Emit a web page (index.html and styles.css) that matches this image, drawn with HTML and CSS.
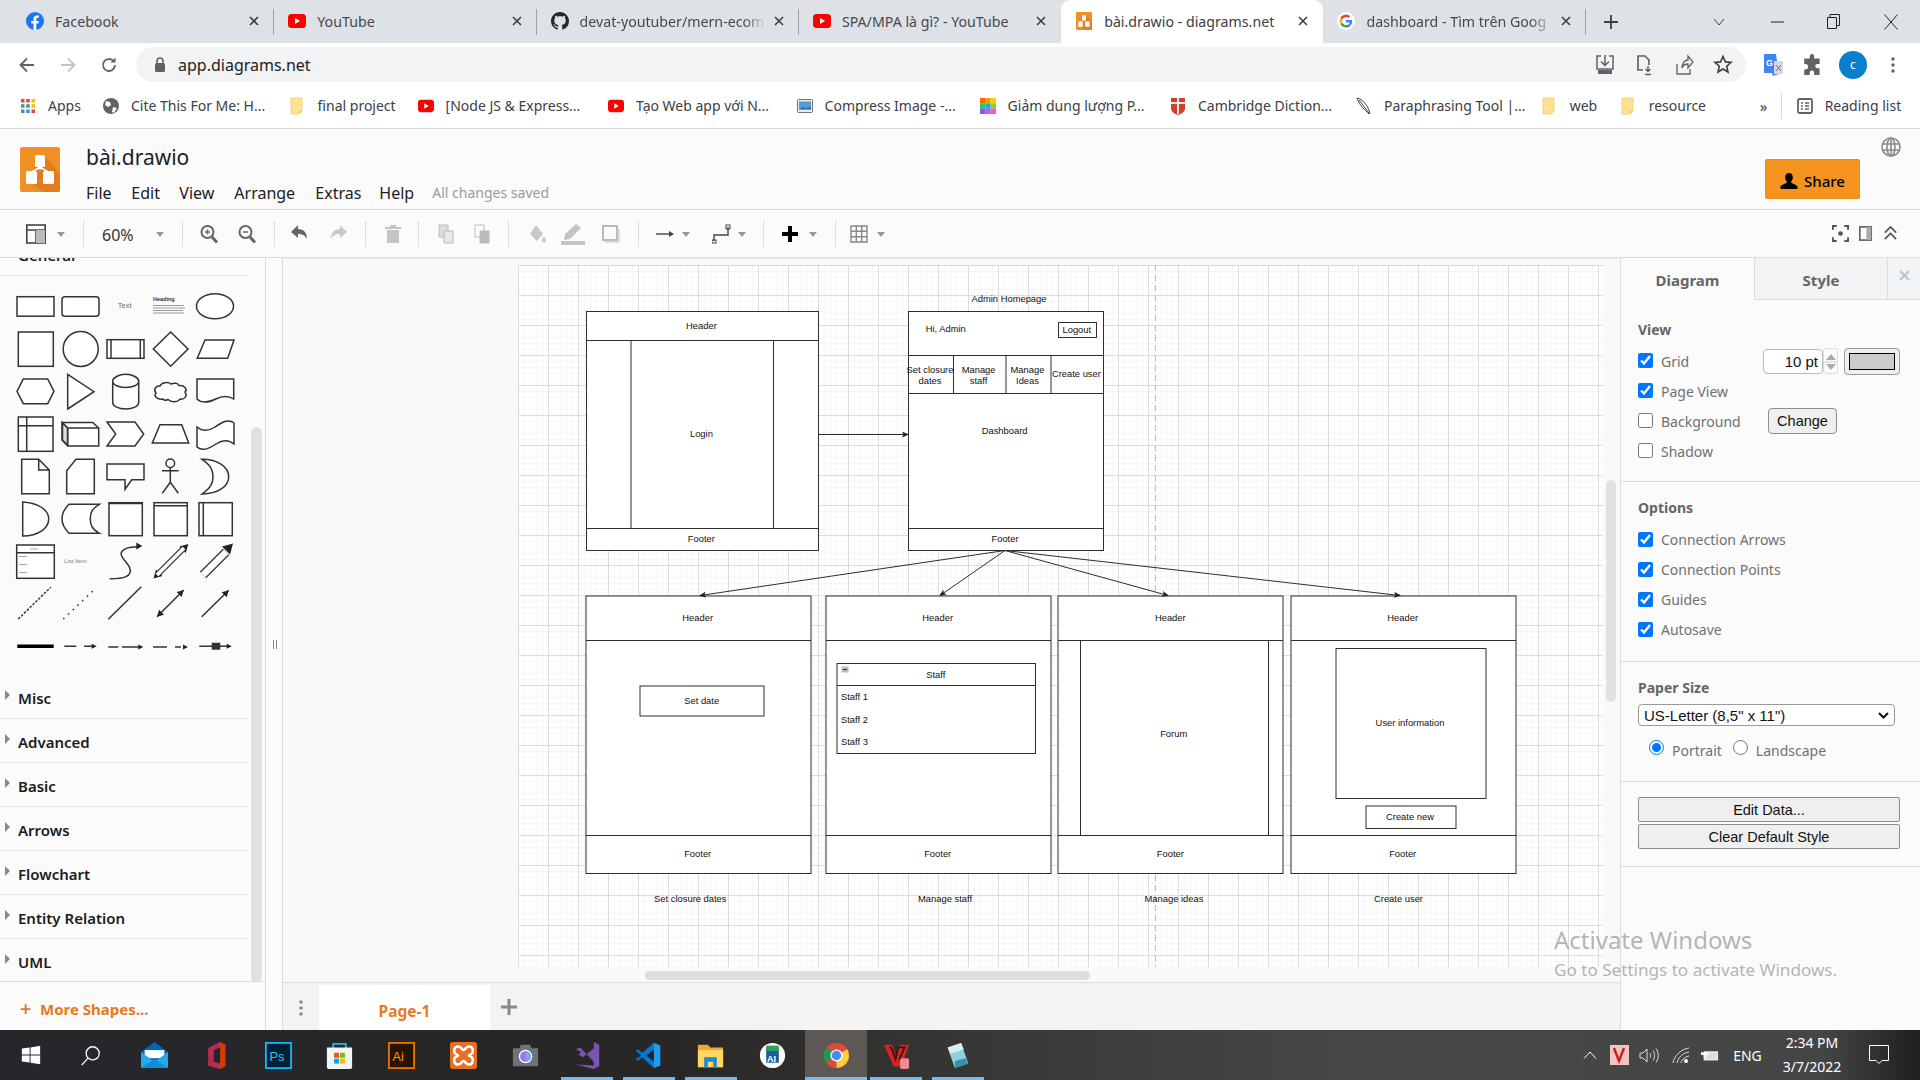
FILE: index.html
```html
<!DOCTYPE html>
<html lang="vi">
<head>
  <meta charset="UTF-8">
  <title>bài.drawio - diagrams.net</title>
  <link rel="stylesheet" href="styles.css">
</head>
<body>
  <!-- icons used more than once -->
  <svg class="defs" width="0" height="0">
    <symbol id="yt" viewBox="0 0 18 18"><rect x="0" y="2" width="18" height="14" rx="3.5" fill="#f00"/><path d="M7 6l5 3-5 3z" fill="#fff"/></symbol>
    <symbol id="folder" viewBox="0 0 16 18"><path d="M1 1h7l0 0h4v13l-3 3H1z" fill="#fde293" stroke="#f3d27a"/><path d="M12 14l-3 3v-3z" fill="#f6c95b"/></symbol>
    <symbol id="close" viewBox="0 0 10 10"><path d="M1 1l8 8M9 1l-8 8" stroke="#3c4043" stroke-width="1.6" fill="none"/></symbol>
    <symbol id="caret" viewBox="0 0 8 8"><path d="M0 2h8L4 7z" fill="currentColor"/></symbol>
    <symbol id="logo" viewBox="0 0 40 45"><rect width="40" height="45" rx="2" fill="#f08f24"/><path d="M40 27v16a2 2 0 0 1-2 2H24L8 34l12-24 9 3z" fill="#df7a1e" opacity=".85"/><rect x="15" y="8" width="10" height="12" rx="1.5" fill="#fff"/><rect x="6" y="24" width="11" height="13" rx="1.5" fill="#fff"/><rect x="23" y="24" width="11" height="13" rx="1.5" fill="#fff"/><path d="M20 19v4M20 20l-8 5M20 20l8 5" stroke="#fff" stroke-width="1.6"/></symbol>
  </svg>

  <!-- Chrome tabs -->
  <div class="tabstrip">
    <div class="tab sep">
      <svg class="tab-icon" viewBox="0 0 18 18"><circle cx="9" cy="9" r="9" fill="#1877f2"/><path d="M12.4 11.5l.4-2.6h-2.500V7.200c0-.7.4-1.400 1.500-1.400h1.100V3.600s-1-.2-2-.2c-2.100 0-3.400 1.300-3.400 3.500v2H5.200v2.600h2.300V18h2.800v-6.500z" fill="#fff"/></svg>
      <span class="tab-title">Facebook</span>
      <svg class="tab-close"><use href="#close"/></svg>
    </div>
    <div class="tab sep">
      <svg class="tab-icon"><use href="#yt"/></svg>
      <span class="tab-title">YouTube</span>
      <svg class="tab-close"><use href="#close"/></svg>
    </div>
    <div class="tab sep">
      <svg class="tab-icon" viewBox="0 0 16 16"><path fill="#24292f" d="M8 0C3.580 0 0 3.580 0 8c0 3.540 2.290 6.530 5.470 7.590.4.070.55-.17.55-.38 0-.19-.01-.82-.01-1.490-2.010.37-2.530-.49-2.690-.94-.09-.23-.48-.94-.82-1.130-.28-.15-.68-.52-.01-.53.63-.01 1.080.58 1.230.82.72 1.210 1.870.87 2.330.66.070-.52.28-.87.51-1.070-1.780-.2-3.640-.89-3.640-3.950 0-.87.31-1.590.82-2.150-.08-.2-.36-1.020.08-2.120 0 0 .67-.21 2.200.82.64-.18 1.320-.27 2-.27s1.360.09 2 .27c1.530-1.040 2.200-.82 2.200-.82.44 1.100.16 1.920.08 2.120.51.56.82 1.270.82 2.150 0 3.070-1.870 3.750-3.650 3.950.29.25.54.73.54 1.480 0 1.070-.01 1.930-.01 2.200 0 .21.15.46.55.38A8.010 8.010 0 0 0 16 8c0-4.420-3.580-8-8-8z"/></svg>
      <span class="tab-title fade">devat-youtuber/mern-ecom</span>
      <svg class="tab-close"><use href="#close"/></svg>
    </div>
    <div class="tab">
      <svg class="tab-icon"><use href="#yt"/></svg>
      <span class="tab-title">SPA/MPA là gì? - YouTube</span>
      <svg class="tab-close"><use href="#close"/></svg>
    </div>
    <div class="tab active">
      <svg class="tab-icon"><use href="#logo"/></svg>
      <span class="tab-title">bài.drawio - diagrams.net</span>
      <svg class="tab-close"><use href="#close"/></svg>
    </div>
    <div class="tab sep">
      <svg class="tab-icon" viewBox="0 0 18 18"><circle cx="9" cy="9" r="9" fill="#fff"/><path d="M15.200 9.200c0-.5 0-.9-.1-1.300H9v2.500h3.500a3 3 0 0 1-1.300 2l2 1.500c1.200-1.100 2-2.700 2-4.700z" fill="#4285f4"/><path d="M9 15.500c1.700 0 3.200-.6 4.200-1.600l-2-1.500c-.6.4-1.300.6-2.200.6-1.700 0-3.100-1.100-3.600-2.600l-2.100 1.600c1 2.100 3.200 3.500 5.700 3.500z" fill="#34a853"/><path d="M5.400 10.400a3.900 3.900 0 0 1 0-2.800L3.300 6a6.400 6.400 0 0 0 0 6z" fill="#fbbc05"/><path d="M9 5c.9 0 1.800.3 2.400.9l1.800-1.800A6.500 6.500 0 0 0 3.300 6l2.100 1.600C5.900 6.100 7.300 5 9 5z" fill="#ea4335"/></svg>
      <span class="tab-title fade">dashboard - Tìm trên Goog</span>
      <svg class="tab-close"><use href="#close"/></svg>
    </div>
    <svg class="new-tab" viewBox="0 0 14 14"><path d="M7 0v14M0 7h14" stroke="#3c4043" stroke-width="1.8"/></svg>
    <div class="win-controls">
      <span class="win-btn"><svg width="12" height="8" viewBox="0 0 12 8"><path d="M1 1l5 6 5-6" stroke="#444" fill="none"/></svg></span>
      <span class="win-btn"><svg width="13" height="2" viewBox="0 0 13 2"><path d="M0 1h13" stroke="#222"/></svg></span>
      <span class="win-btn"><svg width="13" height="15" viewBox="0 0 13 15"><path d="M.5 3.500h9v11h-9zM3 3.500V.5h9.500v11H9.500" stroke="#222" fill="none"/></svg></span>
      <span class="win-btn"><svg width="14" height="16" viewBox="0 0 14 16"><path d="M.5.5l13 15M13.500.5l-13 15" stroke="#222" fill="none"/></svg></span>
    </div>
  </div>

  <!-- Address bar -->
  <div class="addressbar">
    <svg class="nav-btn" viewBox="0 0 18 18"><path d="M16 9H3M9 2.500L2.500 9 9 15.500" stroke="#5f6368" stroke-width="1.800" fill="none"/></svg>
    <svg class="nav-btn" viewBox="0 0 18 18"><path d="M2 9h13M9 2.500L15.500 9 9 15.500" stroke="#c0c3c7" stroke-width="1.800" fill="none"/></svg>
    <svg class="nav-btn" viewBox="0 0 18 18"><path d="M15 9a6 6 0 1 1-1.800-4.300" stroke="#5f6368" stroke-width="1.800" fill="none"/><path d="M15.500 1.500v5h-5z" fill="#5f6368"/></svg>
    <div class="omnibox">
      <svg class="lock" viewBox="0 0 12 15"><path d="M3 6V4a3 3 0 0 1 6 0v2" stroke="#5f6368" stroke-width="1.500" fill="none"/><rect x="1" y="6" width="10" height="9" rx="1.500" fill="#5f6368"/></svg>
      <span class="url">app.diagrams.net</span>
      <span class="omni-actions">
        <svg viewBox="0 0 20 22"><path d="M6 2H2v13h16V2h-4" stroke="#5f6368" stroke-width="1.500" fill="none"/><path d="M10 1v10M6 7.500l4 4 4-4" stroke="#5f6368" stroke-width="1.500" fill="none"/><rect x="3" y="16" width="14" height="4" fill="#5f6368"/></svg>
        <svg viewBox="0 0 20 22"><path d="M9 16H4V2h7l4 4v5" stroke="#5f6368" stroke-width="1.700" fill="none"/><path d="M14 12v5M11.500 15l2.500 2.500 2.500-2.500M11 20.500h6" stroke="#5f6368" stroke-width="1.500" fill="none"/></svg>
        <svg viewBox="0 0 20 22"><path d="M3 10v10h13v-5M8 14c0-5 3-8 6-8V2l5 6-5 6V10c-3 0-5 1-6 4z" stroke="#5f6368" stroke-width="1.300" fill="none"/></svg>
        <svg viewBox="0 0 20 22"><path d="M10 2.500l2.400 5.400 5.600.5-4.300 3.800 1.300 5.800-5-3-5 3 1.300-5.800L2 8.400l5.600-.5z" stroke="#3c4043" stroke-width="1.600" fill="none"/></svg>
      </span>
    </div>
    <svg class="ext-btn" viewBox="0 0 22 24"><path d="M2 1h12l3 20-6 2-1-3H2z" fill="#4285f4"/><path d="M12 8h9v13h-9z" fill="#d4d7db"/><text x="4" y="13" class="ext-letter">G</text><path d="M14 12l5 6M19 12l-5 6" stroke="#777"/></svg>
    <svg class="ext-btn" viewBox="0 0 20 20"><path d="M7 2a2 2 0 0 1 4 0v2h5v5h-2a2 2 0 0 0 0 4h2v6h-5v-2a2 2 0 0 0-4 0v2H2v-5h1a2.500 2.500 0 0 0 0-5H2V4h5z" fill="#5f6368"/></svg>
    <span class="avatar">c</span>
    <svg class="kebab" viewBox="0 0 4 16"><circle cx="2" cy="2" r="1.700" fill="#5f6368"/><circle cx="2" cy="8" r="1.700" fill="#5f6368"/><circle cx="2" cy="14" r="1.700" fill="#5f6368"/></svg>
  </div>

  <!-- Bookmarks bar -->
  <div class="bookmarks">
    <div class="bm"><svg viewBox="0 0 16 16"><g><rect x="1" y="1" width="3.500" height="3.500" fill="#ea4335"/><rect x="6.200" y="1" width="3.500" height="3.500" fill="#ea4335"/><rect x="11.500" y="1" width="3.500" height="3.500" fill="#fbbc05"/><rect x="1" y="6.200" width="3.500" height="3.500" fill="#4285f4"/><rect x="6.200" y="6.200" width="3.500" height="3.500" fill="#34a853"/><rect x="11.500" y="6.200" width="3.500" height="3.500" fill="#fbbc05"/><rect x="1" y="11.500" width="3.500" height="3.500" fill="#34a853"/><rect x="6.200" y="11.500" width="3.500" height="3.500" fill="#4285f4"/><rect x="11.500" y="11.500" width="3.500" height="3.500" fill="#ea4335"/></g></svg>Apps</div>
    <div class="bm"><svg viewBox="0 0 16 16"><circle cx="8" cy="8" r="8" fill="#5f6368"/><path d="M3 3l4 1 1 3-3 2-3-2zM10 9l4 1-3 5-2-1z" fill="#fff"/></svg>Cite This For Me: H...</div>
    <div class="bm"><svg><use href="#folder"/></svg>final project</div>
    <div class="bm"><svg><use href="#yt"/></svg>[Node JS &amp; Express...</div>
    <div class="bm"><svg><use href="#yt"/></svg>Tạo Web app với N...</div>
    <div class="bm"><svg viewBox="0 0 16 16"><rect x=".5" y="1.500" width="15" height="13" rx="1" fill="#e8eaed" stroke="#70757a"/><rect x="2" y="3.500" width="12" height="8" fill="#5b9bd5"/><path d="M2 11.500l4-3 3 2 5-2v3z" fill="#2f6ea8"/></svg>Compress Image -...</div>
    <div class="bm"><svg viewBox="0 0 16 16"><rect width="5.400" height="5.400" fill="#f60"/><rect x="5.300" width="5.400" height="5.400" fill="#f90"/><rect x="10.600" width="5.400" height="5.400" fill="#fc0"/><rect y="5.300" width="5.400" height="5.400" fill="#2c6"/><rect x="5.300" y="5.300" width="5.400" height="5.400" fill="#0bd"/><rect x="10.600" y="5.300" width="5.400" height="5.400" fill="#9c3"/><rect y="10.600" width="5.400" height="5.400" fill="#85f"/><rect x="5.300" y="10.600" width="5.400" height="5.400" fill="#c5e"/><rect x="10.600" y="10.600" width="5.400" height="5.400" fill="#f5c"/></svg>Giảm dung lượng P...</div>
    <div class="bm"><svg viewBox="0 0 16 18"><path d="M1 1h14v10c0 4-4 6-7 7-3-1-7-3-7-7z" fill="#c8432f"/><path d="M8 1v16M1 6h14" stroke="#f4e9dc" stroke-width="2"/></svg>Cambridge Diction...</div>
    <div class="bm"><svg viewBox="0 0 16 18"><path d="M1 1c6 1 11 8 13 15l-1 1C9 13 3 8 1 1z" fill="#fff" stroke="#444"/><path d="M3 3l10 13" stroke="#444"/></svg>Paraphrasing Tool |...</div>
    <div class="bm"><svg><use href="#folder"/></svg>web</div>
    <div class="bm"><svg><use href="#folder"/></svg>resource</div>
    <div class="bm-more">»</div>
    <div class="bm reading"><svg viewBox="0 0 16 16"><rect x="1" y="1" width="14" height="14" rx="1.500" fill="none" stroke="#5f6368" stroke-width="1.800"/><path d="M4 5h2M8 5h4M4 8h2M8 8h4M4 11h2M8 11h4" stroke="#5f6368" stroke-width="1.400"/></svg>Reading list</div>
  </div>

  <!-- diagrams.net menu -->
  <div class="app-header">
    <svg class="app-logo"><use href="#logo"/></svg>
    <div class="app-titles">
      <div class="doc-title">bài.drawio</div>
      <div class="menu">
        <span>File</span><span>Edit</span><span>View</span><span>Arrange</span><span>Extras</span><span>Help</span><span class="saved">All changes saved</span>
      </div>
    </div>
    <button class="share">
      <svg viewBox="0 0 18 18"><path d="M9 1c2.500 0 3.800 2 3.800 4.500 0 2-1 3.400-1.800 4.500 0 1.500 5.500 2.500 6.500 4.500V17H.5v-2.500c1-2 6.500-3 6.500-4.500C6.200 8.900 5.200 7.500 5.200 5.500 5.200 3 6.500 1 9 1z" fill="#000"/></svg>
      Share
    </button>
    <svg class="globe" viewBox="0 0 20 20"><g fill="none" stroke="#8a8a8a" stroke-width="1.600"><circle cx="10" cy="10" r="9"/><ellipse cx="10" cy="10" rx="4" ry="9"/><path d="M10 1v18M1.500 7h17M1.500 13h17"/></g></svg>
  </div>

  <div class="app-toolbar">
    <svg class="ti" viewBox="0 0 20 20"><rect x=".8" y="1" width="18.400" height="18" fill="none" stroke="#444" stroke-width="1.600"/><path d="M.8 6h18.400M10 6v13" stroke="#444" stroke-width="1.600"/><rect x="10" y="6" width="9" height="13" fill="#bbb"/></svg>
    <svg class="tc"><use href="#caret"/></svg>
    <i class="ts"></i>
    <span class="zoom-val">60%</span>
    <svg class="tc"><use href="#caret"/></svg>
    <i class="ts"></i>
    <svg class="ti" viewBox="0 0 20 20"><circle cx="8.500" cy="8" r="6" fill="none" stroke="#666" stroke-width="2"/><path d="M13 13l5 5.500" stroke="#666" stroke-width="3"/><path d="M6 8h5M8.500 5.500v5" stroke="#666" stroke-width="1.500"/></svg>
    <svg class="ti" viewBox="0 0 20 20"><circle cx="8.500" cy="8" r="6" fill="none" stroke="#666" stroke-width="2"/><path d="M13 13l5 5.500" stroke="#666" stroke-width="3"/><path d="M6 8h5" stroke="#666" stroke-width="1.500"/></svg>
    <i class="ts"></i>
    <svg class="ti" viewBox="0 0 20 20"><path d="M8 5V1L1 8l7 6v-4c4 0 7 1 9 5 0-6-3-10-9-10z" fill="#666"/></svg>
    <svg class="ti" viewBox="0 0 20 20"><path d="M12 5V1l7 7-7 6v-4c-4 0-7 1-9 5 0-6 3-10 9-10z" fill="#c8c8c8"/></svg>
    <i class="ts"></i>
    <svg class="ti" viewBox="0 0 20 20"><path d="M2 3h16v2H2zM7 1h6v2H7zM4 6h12v13H4z" fill="#c4c4c4"/></svg>
    <i class="ts"></i>
    <svg class="ti" viewBox="0 0 20 20"><path d="M3 1h9v12H3z" fill="#ddd" stroke="#bbb"/><path d="M8 7h9v12H8z" fill="#e8e8e8" stroke="#bbb"/></svg>
    <svg class="ti" viewBox="0 0 20 20"><path d="M3 1h9v12H3z" fill="#fff" stroke="#bbb"/><path d="M8 7h9v12H8z" fill="#bbb" stroke="#bbb"/></svg>
    <i class="ts"></i>
    <svg class="ti" viewBox="0 0 20 20"><path d="M9 1l7 9-6 7-7-7z" fill="#c8c8c8"/><path d="M17 12c1 2 2 3 2 4.500a2 2 0 0 1-4 0c0-1.500 1-2.500 2-4.500z" fill="#c8c8c8"/></svg>
    <svg class="ti wide" viewBox="0 0 24 24"><path d="M15 2l5 4L9 17l-6 1 1-6z" fill="#c4c4c4"/><rect x="0" y="19" width="24" height="4" fill="#c4c4c4"/></svg>
    <svg class="ti" viewBox="0 0 20 20"><rect x="4" y="5" width="15" height="14" fill="#ddd"/><rect x="2" y="2" width="14" height="14" fill="#fafafa" stroke="#bbb" stroke-width="2"/></svg>
    <i class="ts"></i>
    <svg class="ti" viewBox="0 0 20 20"><path d="M1 10h14" stroke="#444" stroke-width="1.400"/><path d="M14 7l5 3-5 3z" fill="#444"/></svg>
    <svg class="tc"><use href="#caret"/></svg>
    <svg class="ti" viewBox="0 0 20 20"><path d="M2 17v-6h14V3" stroke="#444" stroke-width="1.400" fill="none"/><rect x="14" y="1" width="4" height="4" fill="none" stroke="#444"/><rect x="0" y="16" width="4" height="3" fill="none" stroke="#444"/></svg>
    <svg class="tc"><use href="#caret"/></svg>
    <i class="ts"></i>
    <svg class="ti" viewBox="0 0 20 20"><path d="M10 2v16M2 10h16" stroke="#000" stroke-width="4"/></svg>
    <svg class="tc"><use href="#caret"/></svg>
    <i class="ts"></i>
    <svg class="ti" viewBox="0 0 20 20"><path d="M2 2h16v16H2zM7.300 2v16M12.700 2v16M2 7.300h16M2 12.700h16" fill="none" stroke="#888" stroke-width="1.400"/></svg>
    <svg class="tc"><use href="#caret"/></svg>
    <div class="tb-right">
      <svg viewBox="0 0 18 18"><path d="M1 5V1h4M13 1h4v4M17 13v4h-4M5 17H1v-4" fill="none" stroke="#555" stroke-width="2"/><circle cx="9" cy="9" r="2.500" fill="#555"/></svg>
      <svg viewBox="0 0 18 18"><rect x="3" y="2" width="12" height="14" fill="none" stroke="#666" stroke-width="1.800"/><rect x="10" y="2" width="5" height="14" fill="#aaa"/></svg>
      <svg viewBox="0 0 18 18"><path d="M3 8l6-6 6 6M3 15l6-6 6 6" fill="none" stroke="#555" stroke-width="1.800"/></svg>
    </div>
  </div>

  <div class="workspace">
    <!-- Shapes -->
    <aside class="sidebar">
      <div class="shapes">
        <div class="section general">General</div>
        <svg class="palette" width="248" height="399" viewBox="0 276 248 399">
          <g class="pal">
            <rect x="17" y="296.700" width="37" height="19.500"/>
            <rect x="62" y="296.700" width="37" height="19.500" rx="3"/>
            <ellipse cx="215" cy="306.300" rx="18.500" ry="12.500"/>

            <rect x="18.300" y="332" width="35" height="34.300"/>
            <circle cx="80.700" cy="349" r="17.500"/>
            <rect x="107" y="339.700" width="37" height="18.600"/><path d="M111 339.700v18.600M140.300 339.700v18.600"/>
            <path d="M170.700 332L188 349l-17.300 17.300L153.300 349z"/>
            <path d="M205 340h29l-6.300 18.300h-30.400z"/>

            <path d="M23.300 379h24.400l6.300 12.300-6.300 12.400H23.300L17 391.300z"/>
            <path d="M67.700 374.300L94 391.700 67.700 409z"/>
            <path d="M112.700 381c0-3 5.800-6.700 13-6.700s13 3.700 13 6.700v21.500c0 3.700-5.800 6.500-13 6.500s-13-2.800-13-6.500zM112.700 381c0 4 5.800 6.500 13 6.500s13-2.500 13-6.500"/>
            <path d="M163 399c-6 1-9.500-3-7-6-3-4 0-7.500 4-7 1-3 8-5 11-2 3-1.500 7-1 8 1.500 5-.5 9 3.500 6 6.500 3 4-1 8-5 7-2 3.500-9 3.500-12 .5-2 1-4 1-5-.5z"/>
            <path d="M197 379h36.700v20c-6-4-12-3-18 0s-13 5.500-18.700 0z"/>

            <rect x="18.300" y="417" width="34.700" height="34.300"/><path d="M26.700 417v34.300M18.300 425.700H53"/>
            <path d="M67.700 428H98.700V446H67.700zM67.700 428L62 422.400V440l5.700 6M62 422.400h30.700l6 5.600" /><path d="M62.500 423l5 5v17l-5-5z" class="shade"/>
            <path d="M107 422h28l8.700 12-8.700 12h-28l8.700-12z"/>
            <path d="M160 424.700h21.700l7 18.300h-36.400z"/>
            <path d="M197 427c6 5 12 4 18 0s13-9 19-4v21c-6-5-12-4-18 0s-13 8-19 3z"/>

            <path d="M21.700 459.300h17l10.600 10.700v23.700H21.700zM38.700 459.300V470h10.600"/>
            <path d="M76 459.300h18.300v34.400H66.700v-23z"/>
            <path d="M107 464h37v15.700h-12.300l-6.700 9.600v-9.600h-18z"/>
            <circle cx="170.300" cy="463.300" r="4.300"/><path d="M170.300 467.600v14.700M162 470.700h16.700M170.300 482.300l-8 11M170.300 482.300l8 11"/>
            <path d="M202 459.300c16 0 26.700 7.700 26.700 17.400S218 494 202 494c9-6 11-11 11-17.300s-2-11.400-11-17.400z"/>

            <path d="M22.700 502c16 1 26 8 26 17s-10 17-26 17z"/>
            <path d="M69 504.300h30.300c-8 5-9 9-9 14.500s1 10 9 14.500H69c-4-4-7-9-7-14.500s3-10.500 7-14.500z"/>
            <rect x="109" y="502.700" width="33.300" height="33"/><path d="M109 503.200h33.300" class="thick"/>
            <rect x="154" y="502.700" width="33.300" height="33"/><path d="M154 505.700h33.300"/>
            <rect x="199" y="502.700" width="33.300" height="33"/><path d="M203.300 502.700v33"/>

            <rect x="16.700" y="545" width="37.600" height="33.300"/><path d="M16.700 552.700h37.600"/>
            <path class="open" d="M109.700 578.700c14 0 23-2 20-11-3-7-15-14-4-19 4-2 9-2 13-2"/>
            <path class="open" d="M108.300 619.300l33-32.600"/>
            <path class="open" d="M157 616.700L183.700 590"/>
            <path class="open" d="M201.700 616.700L228.700 590.300"/>
            <path d="M18.300 619l32.400-31.700" class="dash"/>
            <path d="M63.300 619L95 589" class="dots"/>
            <path d="M17.300 646.300h36.400" class="bar"/>
            <path class="open" d="M64.300 646.300h12M84 646.300h10M108.300 647h10M122 647h6M128 647h12M153 647h14M175 647h6M199.300 646.300h13M220 646.300h8"/>
            <rect x="212.500" y="643.500" width="7" height="5.500" fill="#333"/>
          </g>
          <g class="pal-fill">
            <path d="M142.300 546l-6-3.500v7z"/>
            <path d="M153.500 578.500l2.500-9 6.500 6.500zM188.300 544l-9 2.500 6.500 6.500z"/>
            <path d="M233 543.500l-3 11-8-8z"/>
            <path d="M157 616.700l2-7 5 5zM183.700 590l-7 2 5 5zM228.700 590.300l-7 2 5 5z"/>
            <path d="M96.700 646.300l-5-2.500v5zM143.300 647l-5-2.500v5zM188 647l-5-2.500v5zM231.700 646.300l-5-2.500v5z"/>
          </g>
          <g class="blockarrow">
            <path d="M157 575l27-27" class="ba-o"/><path d="M157 575l27-27" class="ba-i"/>
            <path d="M203 575l23-23" class="ba-o w"/><path d="M203 575l23-23" class="ba-i w"/>
          </g>
          <text x="124.700" y="307.500" class="pal-t">Text</text>
          <text x="153" y="301" class="pal-h">Heading</text>
          <path d="M153 305.500h31M153 308h32M153 310.500h30M153 313h31" stroke="#8b8f98" stroke-width=".9"/>
          <text x="64" y="563" class="pal-l">List Item</text>
          <path d="M19 556.500h8M19 564.500h8M19 572.500h8M30 549h8" stroke="#999" stroke-width=".9"/>
        </svg>
        <div class="section"><i class="arrow-r"></i>Misc</div>
        <div class="section"><i class="arrow-r"></i>Advanced</div>
        <div class="section"><i class="arrow-r"></i>Basic</div>
        <div class="section"><i class="arrow-r"></i>Arrows</div>
        <div class="section"><i class="arrow-r"></i>Flowchart</div>
        <div class="section"><i class="arrow-r"></i>Entity Relation</div>
        <div class="section last"><i class="arrow-r"></i>UML</div>
        <div class="side-scroll"></div>
      </div>
      <div class="more-shapes"><span class="plus">+</span>More Shapes...</div>
    </aside>

    <div class="splitter"><i></i></div>

    <!-- Canvas -->
    <main class="center">
      <div class="canvas">
        <svg class="page" width="1085" height="702" viewBox="518 265 1085 702">
          <defs>
            <pattern id="grid" x="518" y="265" width="30" height="30" patternUnits="userSpaceOnUse">
              <path d="M6.500 0v30M12.500 0v30M18.500 0v30M24.500 0v30M0 6.500h30M0 12.500h30M0 18.500h30M0 24.500h30" stroke="#f6f6f6"/>
              <path d="M.5 0v30M0 .5h30" stroke="#dcdcdc"/>
            </pattern>
            <marker id="tip" markerWidth="7" markerHeight="6" refX="6" refY="3" orient="auto" markerUnits="userSpaceOnUse"><path d="M0 0l7 3-7 3 1.500-3z" fill="#222"/></marker>
          </defs>
          <rect x="518" y="265" width="1085" height="702" fill="url(#grid)"/>
          <path d="M1155.500 265v702" stroke="#bdbdbd" stroke-dasharray="6 4"/>

          <g class="box">
            <!-- login -->
            <rect x="586.500" y="311.500" width="232" height="239"/>
            <path d="M586.500 340.500h232M586.500 528.500h232M631 340.500v188M773.500 340.500v188"/>
            <!-- admin home -->
            <rect x="908.500" y="311.500" width="195" height="239"/>
            <path d="M908.500 355.500h195M908.500 393.500h195M953.500 355.500v38M1006 355.500v38M1051 355.500v38M908.500 528.500h195"/>
            <rect x="1058.500" y="322.500" width="38" height="15"/>
            <!-- set closure dates -->
            <rect x="586" y="596" width="225" height="277.500"/>
            <path d="M586 640.500h225M586 835.500h225"/>
            <rect x="640" y="686" width="124" height="30"/>
            <!-- manage staff -->
            <rect x="826" y="596" width="225" height="277.500"/>
            <path d="M826 640.500h225M826 835.500h225"/>
            <rect x="837" y="663.500" width="198.500" height="90"/>
            <path d="M837 685.500h198.500"/>
            <!-- manage ideas -->
            <rect x="1058" y="596" width="225" height="277.500"/>
            <path d="M1058 640.500h225M1058 835.500h225M1080.500 640.500v195M1268.500 640.500v195"/>
            <!-- create user -->
            <rect x="1291" y="596" width="225" height="277.500"/>
            <path d="M1291 640.500h225M1291 835.500h225"/>
            <rect x="1336" y="648.500" width="150" height="150"/>
            <rect x="1366" y="806" width="90" height="22.500"/>
          </g>

          <g class="links">
            <path d="M818 434.500h90"/>
            <path d="M1005 550.500L700 595.500"/>
            <path d="M1005 550.500L940 595.500"/>
            <path d="M1005 550.500L1168 595.500"/>
            <path d="M1005 550.500L1400 595.500"/>
          </g>

          <rect x="841.500" y="666.500" width="7" height="6" fill="#b9bcc4"/><path d="M843 669.500h4" stroke="#333"/>

          <g class="labels">
            <text x="1009" y="302">Admin Homepage</text>
            <text x="701.400" y="329">Header</text>
            <text x="701.400" y="437">Login</text>
            <text x="701.400" y="542">Footer</text>
            <text x="925.700" y="332" class="start">Hi, Admin</text>
            <text x="1076.800" y="332.500">Logout</text>
            <text x="930" y="372.500">Set closure</text>
            <text x="930" y="383.500">dates</text>
            <text x="978.600" y="372.500">Manage</text>
            <text x="978.600" y="383.500">staff</text>
            <text x="1027.500" y="372.500">Manage</text>
            <text x="1027.500" y="383.500">Ideas</text>
            <text x="1076.400" y="377">Create user</text>
            <text x="1004.600" y="434">Dashboard</text>
            <text x="1005" y="542">Footer</text>

            <text x="697.700" y="621">Header</text>
            <text x="701.700" y="704">Set date</text>
            <text x="697.700" y="857">Footer</text>
            <text x="937.700" y="621">Header</text>
            <text x="935.700" y="678">Staff</text>
            <text x="841" y="700" class="start">Staff 1</text>
            <text x="841" y="723" class="start">Staff 2</text>
            <text x="841" y="745" class="start">Staff 3</text>
            <text x="937.700" y="857">Footer</text>
            <text x="1170.300" y="621">Header</text>
            <text x="1173.700" y="737">Forum</text>
            <text x="1170.300" y="857">Footer</text>
            <text x="1402.700" y="621">Header</text>
            <text x="1410" y="726">User information</text>
            <text x="1410" y="820">Create new</text>
            <text x="1402.700" y="857">Footer</text>

            <text x="690.300" y="902">Set closure dates</text>
            <text x="945" y="902">Manage staff</text>
            <text x="1174" y="902">Manage ideas</text>
            <text x="1398.500" y="902">Create user</text>
          </g>
        </svg>
        <div class="v-scroll"></div>
        <div class="h-scroll"></div>
      </div>
      <div class="pagebar">
        <svg class="page-menu" viewBox="0 0 4 16"><circle cx="2" cy="2" r="1.700" fill="#888"/><circle cx="2" cy="8" r="1.700" fill="#888"/><circle cx="2" cy="14" r="1.700" fill="#888"/></svg>
        <div class="page-tab">Page-1</div>
        <svg class="page-add" viewBox="0 0 16 16"><path d="M8 0v16M0 8h16" stroke="#888" stroke-width="3"/></svg>
      </div>
    </main>

    <!-- Format panel -->
    <aside class="panel">
      <div class="panel-tabs">
        <div class="ptab on">Diagram</div>
        <div class="ptab">Style</div>
        <div class="ptab-x"><svg width="11" height="11" viewBox="0 0 11 11"><path d="M1 1l9 9M10 1l-9 9" stroke="#b8c6d4" stroke-width="2.400"/></svg></div>
      </div>

      <section class="psec view">
        <h4>View</h4>
        <div class="row">
          <label class="chk"><input type="checkbox" checked>Grid</label>
          <div class="spin"><span class="spin-val">10 pt</span></div>
          <div class="spin-btn"><svg width="14" height="26" viewBox="0 0 14 26"><path d="M2 11l5-6 5 6z" fill="#aaa"/><path d="M2 15l5 6 5-6z" fill="#aaa"/><path d="M1 13h12" stroke="#ccc"/></svg></div>
          <div class="swatch"><span></span></div>
        </div>
        <div class="row"><label class="chk"><input type="checkbox" checked>Page View</label></div>
        <div class="row"><label class="chk"><input type="checkbox">Background</label><button class="change">Change</button></div>
        <div class="row"><label class="chk"><input type="checkbox">Shadow</label></div>
      </section>

      <section class="psec options">
        <h4>Options</h4>
        <div class="row"><label class="chk"><input type="checkbox" checked>Connection Arrows</label></div>
        <div class="row"><label class="chk"><input type="checkbox" checked>Connection Points</label></div>
        <div class="row"><label class="chk"><input type="checkbox" checked>Guides</label></div>
        <div class="row"><label class="chk"><input type="checkbox" checked>Autosave</label></div>
      </section>

      <section class="psec paper">
        <h4>Paper Size</h4>
        <div class="select-wrap">
          <select class="paper-select"><option>US-Letter (8,5" x 11")</option></select>
          <svg class="select-arrow" width="11" height="7" viewBox="0 0 11 7"><path d="M1 1l4.500 4.500L10 1" fill="none" stroke="#111" stroke-width="2"/></svg>
        </div>
        <div class="orient">
          <label class="rad"><input type="radio" name="o" checked>Portrait</label>
          <label class="rad"><input type="radio" name="o">Landscape</label>
        </div>
      </section>

      <section class="psec actions">
        <button class="wide-btn">Edit Data...</button>
        <button class="wide-btn">Clear Default Style</button>
      </section>
    </aside>
  </div>

  <!-- Windows taskbar -->
  <footer class="taskbar">
    <div class="tk win"><svg viewBox="0 0 24 24"><path d="M2 5l8.500-1.200V11.500H2zM11.500 3.700L22 2v9.500H11.500zM2 12.500h8.500v7.700L2 19zM11.500 12.500H22V22l-10.500-1.600z" fill="#fff"/></svg></div>
    <div class="tk find"><svg viewBox="0 0 24 24"><circle cx="14.500" cy="9.500" r="7.500" fill="none" stroke="#fff" stroke-width="1.500"/><path d="M9 15L2 23" stroke="#fff" stroke-width="1.500"/></svg></div>
    <div class="tk"><svg viewBox="0 0 30 30"><path d="M0 11L15 0l15 11v18H0z" fill="#0364b8"/><path d="M4 9h22v9H4z" fill="#fff"/><path d="M0 11l15 11 15-11v18H0z" fill="#28a8ea"/><path d="M0 29l15-10 15 10z" fill="#0f8ed8"/></svg></div>
    <div class="tk"><svg viewBox="0 0 30 30"><path d="M6 7L19 0l6 3v24l-6 3-13-4z" fill="#d83b01"/><path d="M6 7L19 0v6l-7 3v13l7 2v6L6 26z" fill="#b7295a"/><path d="M12 9l7-3v18l-7-2z" fill="#23262b"/></svg></div>
    <div class="tk"><svg viewBox="0 0 30 30"><rect x="1" y="1" width="28" height="28" fill="#001e36" stroke="#11b8f5" stroke-width="2"/><text x="5" y="21" class="tk-ps">Ps</text></svg></div>
    <div class="tk"><svg viewBox="0 0 30 30"><path d="M8 7V2h14v5" fill="none" stroke="#22b5ee" stroke-width="2"/><path d="M1 6h28v22a2 2 0 0 1-2 2H3a2 2 0 0 1-2-2z" fill="#f4f4f4"/><rect x="9" y="12" width="5.500" height="5.500" fill="#f25022"/><rect x="15.500" y="12" width="5.500" height="5.500" fill="#7fba00"/><rect x="9" y="18.500" width="5.500" height="5.500" fill="#00a4ef"/><rect x="15.500" y="18.500" width="5.500" height="5.500" fill="#ffb900"/></svg></div>
    <div class="tk"><svg viewBox="0 0 30 30"><rect x="1" y="1" width="28" height="28" fill="#261300" stroke="#e87500" stroke-width="2"/><text x="5" y="21" class="tk-ai">Ai</text></svg></div>
    <div class="tk"><svg viewBox="0 0 30 30"><rect width="30" height="30" rx="3" fill="#e86f22"/><path d="M9 5c4 0 4 4 6 4s2-4 6-4 5 4 4 7c-1 2-4 2-4 3s3 1 4 3c1 3 0 7-4 7s-4-4-6-4-2 4-6 4-5-4-4-7c1-2 4-2 4-3S6 14 5 12C4 9 5 5 9 5z" fill="none" stroke="#fff" stroke-width="2.800"/></svg></div>
    <div class="tk"><svg viewBox="0 0 30 30"><path d="M1 7h7l2-4h10l2 4h7v20H1z" fill="#6d7379"/><circle cx="15" cy="16" r="7.500" fill="#fff"/><circle cx="15" cy="16" r="6" fill="#9a77e8"/><path d="M15 10a6 6 0 0 1 0 12z" fill="#7ba6ee"/></svg></div>
    <div class="tk run"><svg viewBox="0 0 30 30"><path d="M22 0l6 3v24l-6 3-20-5 20 1zM2 8l5-2 15 16V7L10 17 5 14l3-3-6-3z" fill="#7a54b8"/></svg></div>
    <div class="tk run"><svg viewBox="0 0 30 30"><path d="M21 1l7 3v22l-7 3L8 17l-5 4-2-2 6-4-6-5 2-2 5 4z" fill="#0078d4"/><path d="M21 8v14l-8-7z" fill="#1f2023"/><path d="M21 1l7 3v22l-7 3z" fill="#1f9cf0"/></svg></div>
    <div class="tk run"><svg viewBox="0 0 30 30"><path d="M1 3h11l3 3h14v22H1z" fill="#f0a830"/><path d="M1 9h28v19H1z" fill="#ffd862"/><path d="M8 17h14v11h-4v-6h-6v6H8z" fill="#1f88d6"/></svg></div>
    <div class="tk"><svg viewBox="0 0 30 30"><circle cx="15" cy="15" r="14" fill="#fff"/><path d="M8 7h14v16H8z" fill="#1b5a9e"/><path d="M8 4h14v6H8z" fill="#2f9e5e"/><text x="9" y="22" class="tk-a">AI</text></svg></div>
    <div class="tk run hot"><svg viewBox="0 0 30 30"><circle cx="15" cy="15" r="14" fill="#dd4b3e"/><path d="M15 15L3 23A14 14 0 0 1 4 6z" fill="#1c9a57"/><path d="M15 15L27 8a14 14 0 0 1-12 21z" fill="#ffcd40"/><circle cx="15" cy="15" r="6.800" fill="#fff"/><circle cx="15" cy="15" r="5.300" fill="#4a8af4"/></svg></div>
    <div class="tk run"><svg viewBox="0 0 30 30"><path d="M1 3h9l5 14 3-14h11L20 27h-8z" fill="#e3211c"/><path d="M7 6h2l5 13 3-13h7l-6 14" fill="none" stroke="#1f1f1f" stroke-width="2"/><rect x="19" y="18" width="10" height="12" rx="2" fill="#f08c92"/></svg></div>
    <div class="tk run"><svg viewBox="0 0 30 30"><path d="M4 6l15-5 8 23-15 5z" fill="#8fd1e0"/><path d="M4 6l15-5 3 7-15 5z" fill="#dcecef"/><path d="M12 29l15-5-3-6-12 3z" fill="#3c8fa5"/></svg></div>

    <div class="tray">
      <span class="tr-cell"><svg width="14" height="8" viewBox="0 0 14 8"><path d="M1 7.500l6-6.500 6 6.500" fill="none" stroke="#fff"/></svg></span>
      <span class="tr-cell"><svg width="19" height="20" viewBox="0 0 19 20"><rect width="19" height="20" fill="#f4c3c3"/><path d="M4 3l5 13 5-13" fill="none" stroke="#c8201a" stroke-width="2.400"/></svg></span>
      <span class="tr-cell"><svg width="20" height="17" viewBox="0 0 20 17"><path d="M1 6h3l4-4v13l-4-4H1zM11 6c1 2 1 3 0 5M14 3.500c2 3 2 7 0 10M17 1.500c3 4 3 10 0 14" fill="none" stroke="#ddd"/></svg></span>
      <span class="tr-cell"><svg width="18" height="17" viewBox="0 0 18 17"><path d="M1 16C2 9 9 2 17 1M5 16c1-5 5-10 12-11M9 16c0-2 3-6 8-7" fill="none" stroke="#ddd"/><circle cx="14" cy="14" r="2" fill="#fff"/></svg></span>
      <span class="tr-cell"><svg width="20" height="14" viewBox="0 0 20 14"><rect x="3.500" y="3.500" width="15" height="9" fill="#ddd" stroke="#fff"/><path d="M2 0v4M6 0v4M0 4h8v3H5v3H3V7H0z" fill="#fff"/></svg></span>
      <span class="tr-cell">ENG</span>
      <span class="tr-cell clock"><span>2:34 PM</span><span>3/7/2022</span></span>
      <span class="tr-cell"><svg width="20" height="20" viewBox="0 0 20 20"><path d="M.5.500h19v15H13l-3 3-3-3H.5z" fill="none" stroke="#fff"/></svg></span>
      <span class="tr-end"></span>
    </div>
  </footer>

  <!-- watermark sits over the canvas and panel -->
  <div class="activate">
    <div class="activate-big">Activate Windows</div>
    <div class="activate-small">Go to Settings to activate Windows.</div>
  </div>
</body>
</html>
```

FILE: styles.css
```css
* { box-sizing: border-box; }

html, body {
  margin: 0;
  padding: 0;
}

body {
  position: relative;
  width: 1920px;
  height: 1080px;
  overflow: hidden;
  display: flex;
  flex-direction: column;
  background: #fff;
  color: #202124;
  font-family: "Noto Sans", "Open Sans", sans-serif;
}

.defs { position: absolute; }

/* Chrome tabs */
.tabstrip {
  height: 43px;
  flex: none;
  display: flex;
  padding-left: 12px;
  background: #dee1e6;
}
.tab {
  position: relative;
  width: 262.3px;
  flex: none;
  display: flex;
  align-items: center;
  padding: 0 13px 1px 14px;
  font-size: 14.2px;
  color: #45494e;
}
.tab.sep::after {
  content: "";
  position: absolute;
  right: 0;
  top: 9px;
  height: 26px;
  width: 1px;
  background: #9ea2a8;
}
.tab.active {
  background: #fff;
  border-radius: 9px 9px 0 0;
  color: #3c4043;
}
.tab-icon { width: 18px; height: 18px; flex: none; }
.tab-title {
  flex: 1;
  margin: 0 6px 0 11px;
  white-space: nowrap;
}
.tab-title.fade {
  -webkit-mask-image: linear-gradient(to right, #000 88%, transparent 100%);
  mask-image: linear-gradient(to right, #000 88%, transparent 100%);
}
.tab-close { width: 10px; height: 10px; flex: none; margin: 0 2px; }
.new-tab { width: 14px; height: 14px; margin: 15px 0 0 18px; flex: none; }
.win-controls { margin-left: auto; display: flex; }
.win-btn {
  width: 58px;
  height: 43px;
  display: flex;
  align-items: center;
  justify-content: center;
}
.win-btn:nth-child(-n+2) { transform: translateX(2px); }

/* Address bar */
.addressbar {
  height: 43px;
  flex: none;
  display: flex;
  align-items: center;
  background: #fff;
  padding-left: 18px;
}
.nav-btn { width: 18px; height: 18px; margin-right: 23px; flex: none; }
.nav-btn + .nav-btn + .nav-btn { margin-right: 0; }
.omnibox {
  width: 1610px;
  height: 35px;
  margin-left: 18px;
  flex: none;
  display: flex;
  align-items: center;
  padding-left: 18px;
  border-radius: 18px;
  background: #f1f3f4;
}
.lock { width: 12px; height: 15px; flex: none; }
.url { margin-left: 12px; font-size: 16px; color: #202124; }
.omni-actions {
  margin-left: auto;
  padding-right: 13px;
  display: flex;
  gap: 19.500px;
}
.omni-actions svg { width: 20px; height: 22px; }
.ext-btn { width: 22px; height: 24px; margin-left: 16px; flex: none; }
.ext-btn + .ext-btn { margin-left: 18px; }
.ext-letter { font: bold 9px "Liberation Sans", sans-serif; fill: #fff; }
.avatar {
  width: 28px;
  height: 28px;
  margin-left: 15px;
  flex: none;
  border-radius: 50%;
  background: #0a7fd0;
  color: #fff;
  font-size: 12px;
  display: flex;
  align-items: center;
  justify-content: center;
}
.kebab { width: 4px; height: 16px; margin-left: 24px; flex: none; }

/* Bookmarks */
.bookmarks {
  height: 43px;
  flex: none;
  display: grid;
  grid-template-columns: 83px 186.600px 128px 190.400px 188.600px 183px 190.400px 186px 185.700px 79px 139px 37px auto;
  align-items: center;
  padding: 0 0 3px 20px;
  background: #fff;
  border-bottom: 1px solid #d5d7da;
  font-size: 14px;
  color: #3c4043;
}
.bm { display: flex; align-items: center; white-space: nowrap; }
.bm svg { width: 16px; height: 18px; flex: none; margin-right: 12px; }
.bm-more { font-size: 15px; }
.reading {
  position: relative;
}
.reading::before {
  content: "";
  position: absolute;
  left: -16px;
  top: -3px;
  height: 26px;
  width: 1px;
  background: #d5d7da;
}

/* App header */
.app-header {
  height: 81px;
  flex: none;
  display: flex;
  padding: 18px 19px 0 20px;
  background: #fbfbfb;
  border-bottom: 1px solid #dadce0;
}
.app-logo { width: 40px; height: 45px; flex: none; }
.app-titles { margin-left: 26px; margin-top: -4px; }
.doc-title { font-size: 21px; line-height: 28px; color: #202124; }
.menu {
  display: grid;
  grid-template-columns: 45.300px 48px 55px 81px 64px 53px auto;
  align-items: center;
  margin-top: 10px;
  font-size: 16px;
  line-height: 24px;
  color: #202124;
}
.saved { font-size: 14px; color: #9a9a9a; }
.share {
  width: 95px;
  height: 40px;
  margin: 12px 0 0 auto;
  padding: 3px 0 0;
  display: flex;
  align-items: center;
  justify-content: center;
  gap: 6px;
  border: 1px solid #ee8a1a;
  border-radius: 2px;
  background: #f4931e;
  color: #000;
  font: 500 15px "Noto Sans", sans-serif;
}
.share svg { width: 18px; height: 18px; }
.globe { width: 20px; height: 20px; margin: -10px 0 0 21px; flex: none; }

/* App toolbar */
.app-toolbar {
  height: 48px;
  flex: none;
  display: grid;
  grid-template-columns: 31px 25.500px 19.500px 54px 25.500px 17.500px 38px 36.500px 16.500px 38px 36.500px 18px 35.500px 17.500px 36.500px 36px 19.100px 36.400px 38px 36.500px 17.100px 27.400px 29.600px 26.400px 24.500px 17.500px 29px 26px 14px 28px 40px 1fr;
  align-items: center;
  padding-left: 26px;
  background: #fbfbfb;
  border-bottom: 1px solid #dadce0;
}
.ti { width: 20px; height: 20px; }
.ti.wide { width: 24px; height: 24px; margin-left: -2px; }
.tc { width: 8px; height: 8px; color: #999; }
.ts { width: 1px; height: 26px; background: #dcdcdc; display: block; }
.zoom-val { font-size: 16px; color: #333; margin-top: 3px; }
.tb-right {
  display: flex;
  justify-content: flex-end;
  gap: 8px;
  padding-right: 21px;
}
.tb-right svg { width: 17px; height: 17px; }

/* Workspace */
.workspace {
  flex: 1;
  display: flex;
  min-height: 0;
  background: #fbfbfb;
}

.sidebar {
  width: 266px;
  flex: none;
  display: flex;
  flex-direction: column;
  border-right: 1px solid #dadce0;
  background: #fbfbfb;
}
.shapes {
  position: relative;
  height: 724px;
  flex: none;
  overflow: hidden;
  border-bottom: 1px solid #dadce0;
}
.section {
  position: relative;
  width: 248px;
  height: 44px;
  padding: 2px 0 0 18px;
  display: flex;
  align-items: center;
  border-bottom: 1px solid #e3e3e3;
  font-size: 15px;
  font-weight: 600;
  color: #1c1c1c;
}
.section.general { margin-top: -26px; }
.section.last { border-bottom: 0; }
.arrow-r {
  position: absolute;
  left: 5px;
  top: 15px;
  border-left: 5px solid #8a8a8a;
  border-top: 5px solid transparent;
  border-bottom: 5px solid transparent;
}
.palette { display: block; }
.pal { fill: #fff; stroke: #333; stroke-width: 1.500; }
.pal .open { fill: none; }
.pal .dash { stroke-dasharray: 2.500 1.500; stroke-width: 1.500; fill: none; }
.pal .dots { stroke-dasharray: 1.500 5; stroke-width: 1.500; fill: none; }
.pal .bar { stroke-width: 3.500; stroke: #000; }
.pal .thick { stroke-width: 2; }
.pal .shade { fill: #ddd; }
.pal-fill { fill: #222; }
.blockarrow { fill: none; }
.ba-o { stroke: #333; stroke-width: 6; }
.ba-i { stroke: #fff; stroke-width: 3.500; }
.ba-o.w { stroke-width: 9; }
.ba-i.w { stroke-width: 6.500; }
.pal-t { font: 7.500px "Liberation Sans", sans-serif; fill: #68707c; text-anchor: middle; }
.pal-h { font: bold 5.500px "Liberation Sans", sans-serif; fill: #333; }
.pal-l { font: 6px "Liberation Sans", sans-serif; fill: #7b7b7b; }
.side-scroll {
  position: absolute;
  left: 251px;
  top: 169px;
  width: 11px;
  height: 555px;
  border-radius: 6px;
  background: #e0e0e0;
}
.more-shapes {
  flex: 1;
  display: flex;
  align-items: center;
  padding: 6px 0 0 20px;
  font-size: 15px;
  font-weight: 700;
  color: #e67a1f;
}
.plus { width: 20px; font-size: 20px; line-height: 20px; font-weight: 600; }

.splitter {
  width: 17px;
  flex: none;
  position: relative;
  border-right: 1px solid #dadce0;
}
.splitter i {
  position: absolute;
  left: 7px;
  top: 382px;
  width: 4px;
  height: 9px;
  border-left: 1px solid #888;
  border-right: 1px solid #888;
}

.center {
  flex: 1;
  min-width: 0;
  display: flex;
  flex-direction: column;
}
.canvas {
  position: relative;
  height: 724px;
  flex: none;
  padding: 6px 0 0 235px;
  background: #f8f9fa;
  border-top: 1px solid #ececec;
  overflow: hidden;
}
.page { display: block; background: #fff; }
.box { fill: #fff; stroke: #2e2e2e; stroke-width: 1; }
.links { fill: none; stroke: #2e2e2e; stroke-width: 1; }
.links path { marker-end: url(#tip); }
.labels text {
  font: 9.400px "Liberation Sans", sans-serif;
  fill: #111;
  text-anchor: middle;
}
.labels text.start { text-anchor: start; }
.v-scroll {
  position: absolute;
  left: 1323px;
  top: 221px;
  width: 10px;
  height: 222px;
  border-radius: 5px;
  background: #e0e1e3;
}
.h-scroll {
  position: absolute;
  left: 362px;
  top: 712px;
  width: 445px;
  height: 9px;
  border-radius: 5px;
  background: #dcdde0;
}
.pagebar {
  flex: 1;
  display: flex;
  align-items: stretch;
  background: #f1f3f4;
  border-top: 1px solid #dadce0;
}
.page-menu { width: 4px; height: 16px; margin: 17px 16px 0; flex: none; }
.page-tab {
  width: 171px;
  flex: none;
  margin-top: 2px;
  padding-top: 15px;
  background: #fff;
  text-align: center;
  font-size: 15.500px;
  font-weight: 700;
  color: #e57c1f;
}
.page-add { width: 16px; height: 16px; margin: 16px 0 0 11px; flex: none; }

/* Format panel */
.panel {
  width: 300px;
  flex: none;
  background: #fbfbfb;
  border-left: 1px solid #dadce0;
  font-size: 14px;
  color: #707070;
}
.panel-tabs { height: 42px; display: flex; }
.ptab {
  width: 133px;
  padding-top: 2px;
  display: flex;
  align-items: center;
  justify-content: center;
  font-size: 15px;
  font-weight: 700;
  color: #666;
  background: #f1f3f4;
  border-left: 1px solid #dadce0;
  border-bottom: 1px solid #dadce0;
}
.ptab.on { background: #fbfbfb; border: 0; }
.ptab-x {
  flex: 1;
  display: flex;
  align-items: center;
  justify-content: center;
  padding-bottom: 6px;
  background: #f1f3f4;
  border-left: 1px solid #dadce0;
  border-bottom: 1px solid #dadce0;
}
.psec {
  padding-left: 17px;
  border-bottom: 1px solid #dadce0;
}
.psec h4 {
  margin: 0;
  height: 20px;
  line-height: 20px;
  font-size: 14px;
  font-weight: 700;
  color: #666;
}
.view { height: 182px; padding-top: 20px; }
.view h4 { margin-bottom: 6px; }
.view .chk input { margin-top: -2px; }
.options { height: 180px; padding-top: 16px; }
.options h4 { margin-bottom: 6px; }
.paper { height: 120px; padding-top: 16px; }
.actions { height: 85px; padding-top: 15px; }
.row { height: 30px; display: flex; align-items: center; }
.chk, .rad { display: flex; align-items: center; }
.chk input, .rad input { width: 15px; height: 15px; margin: 0 8px 0 0; flex: none; }
.rad input { margin-top: -6px; }
.chk { width: 125px; white-space: nowrap; }
.row .change { margin-left: 5px; }
.spin {
  width: 60px;
  height: 25px;
  padding-right: 4px;
  display: flex;
  align-items: center;
  justify-content: flex-end;
  background: #fff;
  border: 1px solid #bbb;
  border-radius: 4px;
}
.spin-val { font: 15px "Liberation Sans", sans-serif; color: #111; }
.spin-btn { width: 15px; height: 26px; border: 1px solid #ddd; border-radius: 3px; }
.spin-btn svg { display: block; }
.swatch {
  width: 56px;
  height: 27px;
  margin-left: 6px;
  padding: 4px;
  border: 1px solid #999;
  border-radius: 4px;
  background: #efefef;
}
.swatch span {
  display: block;
  width: 100%;
  height: 100%;
  background: #ccc;
  border: 1px solid #000;
}
.change {
  width: 69px;
  height: 26px;
  padding: 0;
  border: 1px solid #8d8d8d;
  border-radius: 4px;
  background: #efefef;
  font: 14.500px "Liberation Sans", sans-serif;
  color: #111;
}
.select-wrap {
  position: relative;
  width: 257px;
  margin-top: 6px;
}
.select-arrow {
  position: absolute;
  right: 6px;
  top: 8px;
  pointer-events: none;
}
.paper-select {
  display: block;
  width: 100%;
  height: 22px;
  padding: 0 0 0 5px;
  appearance: none;
  -webkit-appearance: none;
  border: 1px solid #999;
  border-radius: 4px;
  background-color: #fff;
  font: 15px "Liberation Sans", sans-serif;
  color: #111;
}
.orient {
  height: 24px;
  margin: 12px 0 0 11px;
  display: flex;
  align-items: center;
  gap: 11px;
}
.wide-btn {
  display: block;
  width: 262px;
  height: 25px;
  padding: 0;
  margin-bottom: 2px;
  border: 1px solid #8d8d8d;
  border-radius: 2px;
  background: #efefef;
  font: 14.500px "Liberation Sans", sans-serif;
  color: #111;
}

/* Taskbar */
.taskbar {
  height: 50px;
  flex: none;
  display: flex;
  background: linear-gradient(to right, #25272c 0%, #282726 35%, #3b3b39 55%, #454746 70%, #444645 95%, #1f1f1f 100%);
}
.tk {
  position: relative;
  width: 61.800px;
  flex: none;
  display: flex;
  align-items: center;
  justify-content: center;
}
.tk svg { width: 27px; height: 27px; }
.tk.win svg { width: 22px; height: 22px; }
.tk.find svg { width: 21px; height: 21px; margin-right: 4px; }
.tk.run::after {
  content: "";
  position: absolute;
  left: 5px;
  right: 5px;
  bottom: 0;
  height: 3px;
  background: #76b9ed;
}
.tk.hot { background: #5d5853; left: 2px; }
.tk.hot::after { left: 0; right: 0; }
.tk-ps, .tk-ai, .tk-a { font: 14px "Liberation Sans", sans-serif; }
.tk-ps { fill: #31c5f0; }
.tk-ai { fill: #ff9a00; }
.tk-a { fill: #fff; font-weight: bold; font-size: 10px; }
.tray {
  margin-left: auto;
  display: flex;
  align-items: center;
  color: #fff;
  font-size: 14px;
}
.tr-cell {
  height: 50px;
  display: flex;
  align-items: center;
  justify-content: center;
}
.tr-cell:nth-child(1) { width: 24px; }
.tr-cell:nth-child(2) { width: 35px; }
.tr-cell:nth-child(3) { width: 23px; }
.tr-cell:nth-child(4) { width: 41px; }
.tr-cell:nth-child(5) { width: 18px; }
.tr-cell:nth-child(6) { width: 57px; }
.tr-cell:nth-child(8) { width: 62px; }
.clock {
  width: 72px;
  flex-direction: column;
  gap: 6px;
  line-height: 18px;
}
.tr-end { width: 10px; }

.activate {
  position: absolute;
  left: 1554px;
  top: 922px;
  color: rgba(110, 110, 110, 0.52);
  pointer-events: none;
}
.activate-big { font-size: 24px; line-height: 36px; }
.activate-small { font-size: 17.100px; line-height: 24px; }
```
